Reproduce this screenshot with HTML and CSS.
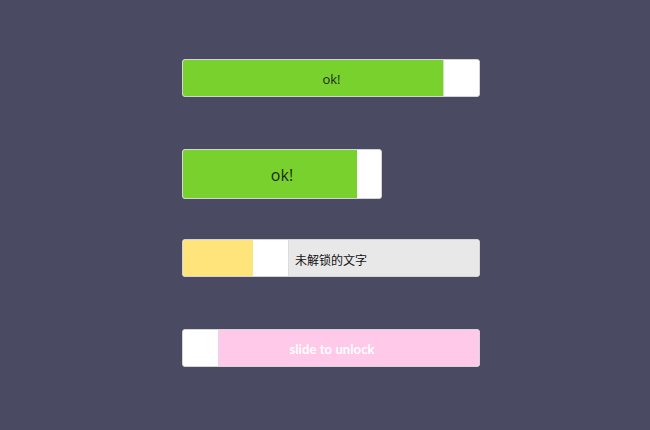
FILE: index.html
```html
<!DOCTYPE html>
<html>
<head>
<meta charset="utf-8">
<link rel="stylesheet" href="styles.css">
</head>
<body>
<div class="page">
  <div class="row">
    <div class="slider s1">
      <div class="track">
        <div class="fill green f1"></div>
        <div class="handle h1"></div>
      </div>
      <div class="label l1">ok!</div>
    </div>
  </div>
  <div class="row">
    <div class="slider s2">
      <div class="track">
        <div class="fill green f2"></div>
        <div class="handle h2"></div>
      </div>
      <div class="label l2">ok!</div>
    </div>
  </div>
  <div class="row">
    <div class="slider s3">
      <div class="track">
        <div class="fill yellow f3"></div>
        <div class="handle h3"></div>
        <div class="rest gray"><span class="cn">未解锁的文字</span></div>
      </div>
    </div>
  </div>
  <div class="row">
    <div class="slider s4">
      <div class="track">
        <div class="handle h4"></div>
        <div class="rest pink"></div>
      </div>
      <div class="label l4">slide to unlock</div>
    </div>
  </div>
</div>
</body>
</html>
```
FILE: styles.css
```css
html, body {
  margin: 0;
  padding: 0;
  background: #4a4b63;
  width: 650px;
  height: 430px;
  overflow: hidden;
}
.page {
  display: flex;
  flex-direction: column;
  padding: 59px 0 0 182px;
}
.row {
  height: 90px;
}
.slider {
  display: grid;
  grid-template-areas: "cell";
  border: 1px solid #d4d4d8;
  border-radius: 3px;
  overflow: hidden;
  box-sizing: border-box;
  background: #fff;
}
.track, .label {
  grid-area: cell;
}
.track {
  display: flex;
}
.label {
  display: flex;
  align-items: center;
  justify-content: center;
  font-family: "Open Sans", "Noto Sans CJK SC", sans-serif;
  color: #1e2a12;
}
.s1 { width: 298px; height: 38px; }
.s2 { width: 200px; height: 50px; }
.s3 { width: 298px; height: 38px; }
.s4 { width: 298px; height: 38px; }
.green { background: #79d12e; }
.yellow { background: #ffe47b; }
.gray { background: #e8e8e8; }
.pink { background: #ffc9ea; }
.f1 { width: 260px; }
.h1 { width: 36px; }
.f2 { width: 174px; }
.h2 { width: 24px; }
.f3 { width: 70px; }
.h3 { width: 35px; border-right: 1px solid #dcdcdc; }
.h4 { width: 35px; border-right: 1px solid #e4d8e0; }
.handle { background: #fff; flex: none; }
.h1 { border-left: 1px solid #cfe3bf; }
.rest {
  flex: 1;
  display: flex;
  align-items: center;
}
.l1 { font-size: 13px; padding-top: 1px; }
.l2 { font-size: 16px; padding-top: 1px; }
.cn {
  font-family: "Noto Sans CJK SC", sans-serif;
  font-size: 12px;
  color: #111;
  padding-left: 6px;
  padding-top: 2px;
}
.l4 {
  font-family: Lato, "Open Sans", sans-serif;
  font-weight: bold;
  font-size: 13px;
  color: #fff;
  padding-left: 2px;
  padding-top: 2px;
  letter-spacing: 0.1px;
}
```
